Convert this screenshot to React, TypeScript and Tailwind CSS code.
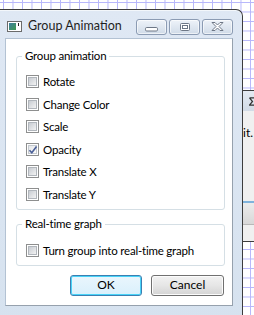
import React from "react";

const FONT = { fontFamily: 'Lato, "Liberation Sans", sans-serif' };

function Check({ checked }: { checked?: boolean }) {
  return (
    <span className="relative flex h-[13px] w-[13px] shrink-0 border border-[#8e8f8f] bg-white p-[1px]">
      <span
        className={
          "flex flex-1 items-center justify-center border " +
          (checked
            ? "border-[#c4c9cf] bg-gradient-to-br from-[#e4e6e9] to-[#fbfbfb]"
            : "border-[#b1b6bc] bg-gradient-to-br from-[#c8ccd2] to-[#f3f3f3]")
        }
      />
      {checked && (
        <svg className="absolute left-[1px] top-[1px]" width="10" height="10" viewBox="0 0 10 10">
          <path d="M1.5 5.2 L3.8 7.8 L8.5 1.5" fill="none" stroke="#4a5f97" strokeWidth="1.6" />
        </svg>
      )}
    </span>
  );
}

function Row({ label, checked }: { label: string; checked?: boolean }) {
  return (
    <div className="flex h-[13px] items-center gap-[4px]">
      <Check checked={checked} />
      <span className="text-[11.5px] leading-[13px] tracking-[-0.2px] text-black">{label}</span>
    </div>
  );
}

function Group({ title, children, className }: { title: string; children: React.ReactNode; className?: string }) {
  return (
    <div className={"relative rounded-[3px] border border-[#d5dfe5] " + (className ?? "")}>
      <span className="absolute left-[5px] top-[-9px] bg-white px-[3px] text-[11.5px] leading-[16px] tracking-[-0.2px] text-black">
        {title}
      </span>
      {children}
    </div>
  );
}

function CapButton({ children }: { children: React.ReactNode }) {
  return (
    <div className="flex h-[16px] w-[31px] items-center justify-center rounded-[3px] border border-[#8b9bb3] bg-gradient-to-b from-[#eef3f9] to-[#d0dbe8] shadow-[inset_0_0_0_1px_rgba(255,255,255,0.6)]">
      {children}
    </div>
  );
}

export default function App() {
  return (
    <div
      className="relative h-[315px] w-[254px] overflow-hidden bg-white bg-[linear-gradient(to_right,#b6b6fb_1px,transparent_1px),linear-gradient(to_bottom,#b6b6fb_1px,transparent_1px)] bg-[size:9.5px_9.5px] bg-[position:3px_2px]"
      style={FONT}
    >
      {/* window behind, on the right */}
      <div className="absolute left-[243px] top-[90px] flex h-[152px] w-[20px] flex-col border-y border-[#3d3d3d] bg-[#f0f0f0]">
        <div className="flex h-[20px] items-center bg-gradient-to-b from-[#e4eaf2] to-[#d2dbe6] pl-[6px]">
          <svg width="6" height="9" viewBox="0 0 6 9">
            <path d="M0.5 0.8 H6 M0.5 0.8 L3.5 4.5 L0.5 8.2 H6" fill="none" stroke="#333" strokeWidth="1.2" />
          </svg>
        </div>
        <div className="h-[15px]" />
        <div className="text-[12px] leading-[14px] text-black">it.</div>
        <div className="h-[61px]" />
        <div className="h-[2px] bg-[#7fb3dc]" />
        <div className="h-[21px] bg-gradient-to-b from-[#ececec] to-[#d8d8d8]" />
        <div className="h-[1px] bg-[#b8b8b8]" />
      </div>

      {/* dialog window */}
      <div className="absolute left-0 top-[9px] flex h-[320px] w-[243px] flex-col rounded-tr-[7px] border-r border-t border-[#3d3d3d] bg-gradient-to-b from-[#dfe8f4] to-[#d6e2ef] shadow-[inset_0_1px_0_#f3f7fb]">
        {/* title bar */}
        <div className="flex h-[28px] items-center pl-[7px] pr-[9px] pt-[5px]">
          <svg width="15" height="11" viewBox="0 0 15 11" className="shrink-0">
            <defs>
              <linearGradient id="ic" x1="0" y1="0" x2="1" y2="1">
                <stop offset="0" stopColor="#3f7fa0" />
                <stop offset="1" stopColor="#3f9a4f" />
              </linearGradient>
            </defs>
            <rect x="0.5" y="0.5" width="14" height="10" fill="#fff" stroke="#6b6b6b" />
            <rect x="2" y="2" width="7" height="7" fill="url(#ic)" />
            <rect x="11" y="2" width="1" height="3" fill="#222" />
          </svg>
          <span className="ml-[6px] text-[12.5px] leading-none text-[#1e1e1e]">Group Animation</span>
          <div className="ml-auto flex gap-[2px]">
            <CapButton>
              <svg width="15" height="10" viewBox="0 0 15 10">
                <rect x="1.5" y="5.5" width="12" height="3.5" rx="1.2" fill="#fff" stroke="#6d7786" />
              </svg>
            </CapButton>
            <CapButton>
              <svg width="12" height="10" viewBox="0 0 12 10">
                <rect x="1.5" y="1.5" width="9" height="7" rx="1" fill="#fff" stroke="#6d7786" />
                <rect x="3.5" y="3.5" width="5" height="3" fill="none" stroke="#6d7786" />
              </svg>
            </CapButton>
            <CapButton>
              <svg width="13" height="11" viewBox="0 0 13 11">
                <path
                  d="M1 1.5 L4 1.5 L6.5 4 L9 1.5 L12 1.5 L8 5.5 L12 9.5 L9 9.5 L6.5 7 L4 9.5 L1 9.5 L5 5.5 Z"
                  fill="#fff"
                  stroke="#6d7786"
                  strokeLinejoin="round"
                />
              </svg>
            </CapButton>
          </div>
        </div>

        {/* client area */}
        <div className="ml-[5px] flex h-[268px] w-[228px] flex-col border border-[#96a1ad] border-l-[#b3c2d3] border-t-[#b3c2d3] bg-white pl-[10px] pr-[7px] pt-[17px]">
          <Group title="Group animation" className="pl-[9px] pr-[8px] pb-[8px] pt-[18px]">
            <div className="flex flex-col gap-[9.5px]">
              <Row label="Rotate" />
              <Row label="Change Color" />
              <Row label="Scale" />
              <Row label="Opacity" checked />
              <Row label="Translate X" />
              <Row label="Translate Y" />
            </div>
          </Group>
          <Group title="Real-time graph" className="mt-[14px] pl-[9px] pb-[8px] pt-[19px]">
            <Row label="Turn group into real-time graph" />
          </Group>
          <div className="mr-[1px] mt-[9px] flex justify-end gap-[9px]">
            <button className="flex h-[21px] w-[72px] items-center justify-center rounded-[3px] border border-[#3c7fb1] bg-gradient-to-b from-[#eaf6fd] to-[#d9f0fc] text-[12px] leading-none text-black shadow-[inset_0_0_0_1px_#48d3f8]">
              OK
            </button>
            <button className="flex h-[21px] w-[73px] items-center justify-center rounded-[3px] border border-[#707070] bg-gradient-to-b from-[#f2f2f2] via-[#e6e6e6] to-[#d4d4d4] text-[12px] leading-none text-black shadow-[inset_0_0_0_1px_#fcfcfc]">
              Cancel
            </button>
          </div>
        </div>
      </div>
    </div>
  );
}
